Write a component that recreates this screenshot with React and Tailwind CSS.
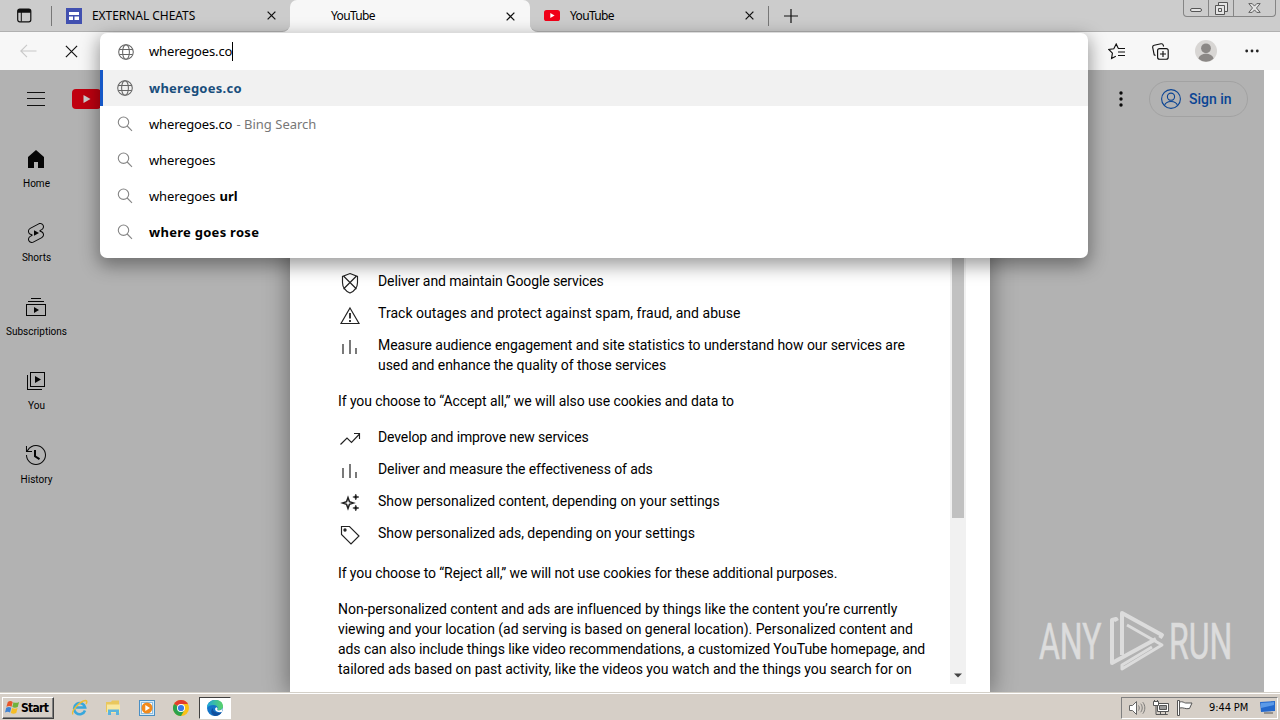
const YT = {
  home: 'M4 21V10.08l8-6.96 8 6.96V21h-6v-6h-4v6H4z',
  shorts:
    'M10 14.65v-5.3L15 12l-5 2.65zm7.77-4.33-1.2-.5L18 9.06c1.84-.96 2.53-3.23 1.56-5.06s-3.24-2.53-5.07-1.56L6 6.94c-1.29.68-2.07 2.04-2 3.49.07 1.42.93 2.67 2.22 3.25.03.01 1.2.5 1.2.5L6 14.93c-1.83.97-2.53 3.24-1.56 5.07.97 1.83 3.24 2.53 5.07 1.56l8.5-4.5c1.29-.68 2.06-2.04 1.99-3.49-.07-1.42-.94-2.68-2.23-3.25zm-.23 5.86-8.5 4.5c-1.34.71-3.01.2-3.72-1.14-.71-1.34-.2-3.01 1.14-3.72l2.04-1.08v-1.21l-.69-.28-1.11-.46c-.99-.41-1.65-1.35-1.7-2.41-.05-1.06.52-2.06 1.46-2.56l8.5-4.5c1.34-.71 3.01-.2 3.72 1.14.71 1.34.2 3.01-1.14 3.72L15.5 9.26v1.21l1.8.74c.99.41 1.65 1.35 1.7 2.41.05 1.06-.52 2.06-1.46 2.56z',
  subs: 'M10 18v-6l5 3-5 3zm7-15H7v1h10V3zm3 3H4v1h16V6zm2 3H2v12h20V9zM3 10h18v10H3V10z',
  you: 'm11 7 6 3.5-6 3.5V7zm7 13H4V6H3v15h15v-1zm3-2H6V3h15v15zM7 17h13V4H7v13z',
  history:
    'M14.97 16.95 10 13.87V7h2v5.76l4.03 2.49-1.06 1.7zM22 12c0 5.51-4.49 10-10 10S2 17.51 2 12h1c0 4.96 4.04 9 9 9s9-4.04 9-9-4.04-9-9-9C8.81 3 5.92 4.64 4.28 7.38c-.11.18-.22.37-.31.56L3.94 8H8v1H1.96V3h1v4.74c.04-.09.07-.17.11-.25.11-.22.23-.42.35-.63C5.22 3.86 8.51 2 12 2c5.51 0 10 4.49 10 10z',
};

function Cross({ className = 'size-[9px]', w = 1.4 }) {
  return (
    <svg className={className} viewBox="0 0 10 10" stroke="#111" strokeWidth={w} fill="none">
      <path d="M.7.7l8.6 8.6M9.3.7L.7 9.3" />
    </svg>
  );
}

function YtBadge({ className }) {
  return (
    <svg className={className} viewBox="0 0 16 11">
      <rect width="16" height="11" rx="2.6" fill="#f00018" />
      <path d="M6.3 3.1v4.8l4.3-2.4z" fill="#fff" />
    </svg>
  );
}

function TabStrip() {
  return (
    <div className="flex h-[32px] bg-linear-to-b from-[#cccccc] from-50% to-[#f7f7f7] to-50% text-[12px] text-black">
      <div className="flex w-[290px] shrink-0 items-center rounded-br-[8px] border-b border-[#b0b0b0] bg-[#cccccc]">
        <svg className="ml-[17px] size-[15px]" viewBox="0 0 15 15">
          <rect x=".7" y="1.2" width="13.1" height="12.6" rx="2" fill="none" stroke="#111" strokeWidth="1.2" />
          <path d="M.8 3a2 2 0 0 1 2-2h9a2 2 0 0 1 2 2v1.7H.8z" fill="#111" />
          <path d="M4.3 4v9.5" stroke="#111" />
        </svg>
        <div className="ml-[19px] h-[20px] w-px bg-[#777]" />
        <svg className="ml-[14px] size-[16px]" viewBox="0 0 16 16">
          <rect width="16" height="16" fill="#4150b0" />
          <path d="M3 4h10v3H3zM3 8.5h4V12H3zM8.5 8.5H13V12H8.5z" fill="#fff" />
        </svg>
        <span className="ml-[10px] w-[175px] text-[12px] tracking-[-0.05px]">EXTERNAL CHEATS</span>
        <Cross />
      </div>
      <div className="flex h-[32px] w-[240px] shrink-0 items-center rounded-t-[7px] bg-[#f7f7f7]">
        <span className="ml-[41px] w-[175px] tracking-[-0.65px]">YouTube</span>
        <Cross />
      </div>
      <div className="flex flex-1 items-center rounded-bl-[8px] border-b border-[#b0b0b0] bg-[#cccccc]">
        <YtBadge className="ml-[14px] h-[11px] w-[16px]" />
        <span className="ml-[10px] w-[175px] tracking-[-0.65px]">YouTube</span>
        <Cross />
        <div className="ml-[14px] h-[20px] w-px bg-[#777]" />
        <svg className="ml-[15px] size-[14px]" viewBox="0 0 14 14" stroke="#111" strokeWidth="1.2">
          <path d="M7 0v14M0 7h14" />
        </svg>
        <div className="mr-[4px] mb-auto ml-auto flex h-[17px] w-[93px] rounded-b-[4px] border border-t-0 border-[#858585]">
          <div className="flex w-[25px] items-center justify-center border-r border-[#858585]">
            <div className="mt-[4px] h-[4px] w-[12px] rounded-[2px] border border-[#555] bg-[#e4e4e4]" />
          </div>
          <div className="flex w-[25px] items-center justify-center border-r border-[#858585]">
            <svg className="size-[13px]" viewBox="0 0 13 13" fill="#e4e4e4" stroke="#555">
              <path d="M3.5.5h9v9h-9z" />
              <path d="M.5 3.500h9v9h-9z" />
              <path d="M3.500 6.500h3v3h-3z" />
            </svg>
          </div>
          <div className="flex flex-1 items-center justify-center">
            <svg className="h-[10px] w-[13px]" viewBox="0 0 13 10" fill="#e4e4e4" stroke="#555" strokeWidth=".9">
              <path d="M.8.6h3.400l2.300 2.500L8.800.6h3.400L8.500 5l3.700 4.400H8.800L6.500 6.900 4.200 9.400H.8L4.500 5z" />
            </svg>
          </div>
        </div>
      </div>
    </div>
  );
}

function Toolbar() {
  return (
    <div className="flex h-[38px] items-center bg-[#f7f7f7]">
      <svg className="ml-[20px] h-[14px] w-[17px]" viewBox="0 0 17 14" fill="none" stroke="#c8c8c8" strokeWidth="1.1">
        <path d="M16.500 7H1M7 .8L.8 7 7 13.200" />
      </svg>
      <Cross className="ml-[28px] size-[13px]" w={0.9} />
      <div className="mr-[21px] ml-auto flex items-center">
        <svg className="h-[17px] w-[18px]" viewBox="0 0 18 17" fill="none" stroke="#111" strokeWidth="1.150">
          <path d="M10.200 5.200L8.200 1 5.800 5.700.8 6.500l3.600 3.700-.8 5.200 4.200-2.200M10 5.500h7M10 9h7M10 12.500h7" />
        </svg>
        <svg className="ml-[26px] h-[17px] w-[17px]" viewBox="0 0 17 17" fill="none" stroke="#111" strokeWidth="1.150">
          <rect x="5.600" y="5.600" width="10.600" height="10.600" rx="2" />
          <path d="M11 8v6M8 11h6M3.500 12.500L2.200 11.800.7 4.500A2 2 0 0 1 2.200 2.200L9 .8a2 2 0 0 1 2.300 1.500l.3 1.200" />
        </svg>
        <svg className="ml-[26px] size-[22px]" viewBox="0 0 22 22">
          <circle cx="11" cy="11" r="11" fill="#d8d6d4" />
          <circle cx="11" cy="8.300" r="4.900" fill="#8b8886" />
          <path d="M3.500 18.700c1-6.500 14-6.500 15 0a11 11 0 0 1-15 0z" fill="#8b8886" />
        </svg>
        <svg className="ml-[28px] h-[4px] w-[14px]" viewBox="0 0 14 4" fill="#222">
          <circle cx="1.700" cy="2" r="1.400" />
          <circle cx="7" cy="2" r="1.400" />
          <circle cx="12.300" cy="2" r="1.400" />
        </svg>
      </div>
    </div>
  );
}

const guide = [
  ['Home', YT.home],
  ['Shorts', YT.shorts],
  ['Subscriptions', YT.subs],
  ['You', YT.you],
  ['History', YT.history],
];

function Page() {
  return (
    <div className="flex h-full w-[1264px] flex-col bg-[#b2b2b2] font-['Roboto',sans-serif]">
      <div className="flex h-[58px] shrink-0 items-center">
        <svg className="ml-[27px] h-[14px] w-[18px]" viewBox="0 0 18 14" stroke="#111">
          <path d="M0 .5h18M0 6.500h18M0 13.500h18" />
        </svg>
        <svg className="ml-[27px] h-[20px] w-[29px]" viewBox="0 0 29 20">
          <rect width="29" height="20" rx="4" fill="#c00010" />
          <path d="M11.500 6v8l7-4z" fill="#ccc" />
        </svg>
        <div className="mr-[16px] ml-auto flex items-center">
          <svg className="mr-[26px] h-[16px] w-[4px]" viewBox="0 0 4 16" fill="#0a0a0a">
            <circle cx="2" cy="2" r="1.700" />
            <circle cx="2" cy="8" r="1.700" />
            <circle cx="2" cy="14" r="1.700" />
          </svg>
          <div className="flex h-[36px] w-[99px] items-center rounded-full border border-[#a2a2a2] pl-[11px]">
            <svg className="size-[20px]" viewBox="0 0 20 20" fill="none" stroke="#0a4494" strokeWidth="1.100">
              <circle cx="10" cy="10" r="9.400" />
              <circle cx="10" cy="7.700" r="3.600" />
              <path d="M3.500 16.600c1.500-5.500 11.500-5.500 13 0" />
            </svg>
            <span className="ml-[8px] text-[14px] font-medium text-[#0a4494]">Sign in</span>
          </div>
        </div>
      </div>
      <div className="flex w-[72px] flex-col pt-[4px]">
        {guide.map(([label, d]) => (
          <div key={label} className="flex h-[74px] flex-col items-center pt-[15px]">
            <svg className="size-[24px]" viewBox="0 0 24 24" fill="#060606">
              <path d={d} />
            </svg>
            <span className="mt-[6px] pl-[1px] text-[10px] leading-[14px] whitespace-nowrap text-black">{label}</span>
          </div>
        ))}
      </div>
    </div>
  );
}

const bars = <path d="M5 9v10M12 5v14M18 13v6" strokeWidth="1.200" />;
const essential = [
  [
    <path d="M12 2.500l7.500 3v6c0 5-3 8.500-7.500 10.500-4.500-2-7.500-5.500-7.500-10.500v-6zM5.500 5l13 13M18.500 5l-13 13" />,
    [['Deliver and maintain Google services', 'tracking-[-0.11px]']],
  ],
  [
    <g>
      <path d="M12 5L21 20.500H3z" />
      <path d="M12 10v5.500M12 17v2" strokeWidth="1.800" />
    </g>,
    [['Track outages and protect against spam, fraud, and abuse', 'tracking-[0.04px]']],
  ],
  [
    bars,
    [
      ['Measure audience engagement and site statistics to understand how our services are', 'tracking-[-0.05px]'],
      ['used and enhance the quality of those services', 'tracking-[-0.07px]'],
    ],
  ],
];
const optional = [
  [<path d="M2.500 17.500l6.500-6.500 4.500 4.500 8-8.500M16 6.500h5.500v5.500" />, [['Develop and improve new services', 'tracking-[-0.12px]']]],
  [bars, [['Deliver and measure the effectiveness of ads', 'tracking-[-0.11px]']]],
  [
    <g transform="translate(0 -1)">
      <path d="M10 7.500l1.400 4.100L15.500 13l-4.100 1.400L10 18.500l-1.400-4.100L4.500 13l4.100-1.400z" strokeWidth="1.500" />
      <path d="M17.800 4l.8 2.200 2.400.8-2.400.8-.8 2.200-.8-2.200-2.200-.8 2.200-.8zM17.800 15l.8 2.200 2.400.8-2.400.8-.8 2.200-.8-2.200-2.200-.8 2.200-.8z" fill="#111" strokeWidth=".5" />
    </g>,
    [['Show personalized content, depending on your settings', 'tracking-[-0.025px]']],
  ],
  [
    <g>
      <path d="M3.500 3.500h8l9.500 9.500-8 8-9.500-9.500z" />
      <circle cx="7" cy="7" r="1.100" fill="#111" />
    </g>,
    [['Show personalized ads, depending on your settings', 'tracking-[-0.03px]']],
  ],
];

function Bullets({ items }) {
  return (
    <ul className="flex flex-col gap-[12px]">
      {items.map(([icon, lines]) => (
        <li key={lines[0][0]} className="flex last:min-h-[24px]">
          <svg className="mr-[16px] -mb-[4px] size-[24px] shrink-0" viewBox="0 0 24 24" fill="none" stroke="#222" strokeWidth="1.150">
            {icon}
          </svg>
          <div>
            {lines.map(([text, tracking]) => (
              <div key={text} className={tracking}>
                {text}
              </div>
            ))}
          </div>
        </li>
      ))}
    </ul>
  );
}

function ConsentDialog() {
  return (
    <div className="absolute top-0 left-[290px] flex h-[622px] w-[700px] bg-white shadow-[0_0_22px_2px_rgba(0,0,0,0.38)]">
      <div className="flex h-[612px] w-[660px] flex-col gap-[16px] overflow-hidden pt-[201px] pl-[48px] font-['Roboto',sans-serif] text-[14px] leading-[20px] whitespace-nowrap text-black">
        <Bullets items={essential} />
        <p className="tracking-[-0.09px]">If you choose to “Accept all,” we will also use cookies and data to</p>
        <Bullets items={optional} />
        <p className="tracking-[-0.095px]">If you choose to “Reject all,” we will not use cookies for these additional purposes.</p>
        <p>
          <span className="tracking-[-0.02px]">Non-personalized content and ads are influenced by things like the content you’re currently</span>
          <br />
          <span className="tracking-[-0.035px]">viewing and your location (ad serving is based on general location). Personalized content and</span>
          <br />
          <span className="tracking-[-0.08px]">ads can also include things like video recommendations, a customized YouTube homepage, and</span>
          <br />
          <span className="tracking-[-0.03px]">tailored ads based on past activity, like the videos you watch and the things you search for on</span>
          <br />
          <span className="tracking-[-0.05px]">YouTube. We also use cookies and data to tailor the experience to be age-appropriate, if relevant.</span>
        </p>
      </div>
      <div className="flex h-[614px] w-[16px] flex-col items-center bg-[#f1f1f1]">
        <div className="h-[448px] w-[12px] bg-[#c1c1c1]" />
        <svg className="mt-auto mb-[6px] h-[5px] w-[8px]" viewBox="0 0 8 5">
          <path d="M0 .5h8L4 4.500z" fill="#444" />
        </svg>
      </div>
    </div>
  );
}

function Watermark() {
  return (
    <svg className="absolute top-[534px] left-[1034px] h-[76px] w-[204px]" viewBox="1034 604 204 76">
      <g fill="#dcdcdc" stroke="#dcdcdc" strokeWidth=".6" className="font-['Roboto',sans-serif] text-[50px]">
        <text transform="translate(1039 659) scale(.64 1)">ANY</text>
        <text transform="translate(1169 659) scale(.64 1)">RUN</text>
      </g>
      <g fill="none" stroke="#dcdcdc" strokeWidth="4" strokeLinejoin="round">
        <path d="M1117 621l-1-2-4 1v43l44-24" />
        <path d="M1122 655v-42l40 22-2 3" />
        <path d="M1127 625l35 20-40 24v-4l30-18" strokeWidth="3" />
      </g>
    </svg>
  );
}

function Globe() {
  return (
    <svg className="size-[16px]" viewBox="0 0 16 16" fill="none" stroke="#666" strokeWidth="1.050">
      <circle cx="8" cy="8" r="7.300" />
      <ellipse cx="8" cy="8" rx="3.400" ry="7.300" />
      <path d="M1.300 5.500h13.400M1.300 10.500h13.400" />
    </svg>
  );
}

function Lens() {
  return (
    <svg className="size-[16px]" viewBox="0 0 16 16" fill="none" stroke="#858585" strokeWidth="1.100">
      <circle cx="6.500" cy="6.200" r="5.200" />
      <path d="M10.200 10l4.800 4.800" />
    </svg>
  );
}

function Omnibox() {
  const row = 'flex h-[36px] items-center gap-[16px] pl-[17px]';
  return (
    <div className="absolute top-[33px] left-[100px] h-[225px] w-[988px] rounded-[7px] bg-white text-[13px] whitespace-nowrap text-black shadow-[0_6px_18px_2px_rgba(0,0,0,0.38)]">
      <div className="flex h-[37px] items-center pl-[18px]">
        <Globe />
        <span className="ml-[15px] tracking-[-0.15px]">wheregoes.co</span>
        <span className="h-[19px] w-px bg-black" />
      </div>
      <div className="flex h-[36px] items-center gap-[16px] border-l-[3px] border-[#1558c7] bg-[#f1f1f1] pl-[14px]">
        <Globe />
        <b className="pt-[2px] tracking-[0.25px] text-[#194e7c]">wheregoes.co</b>
      </div>
      <div className={row}>
        <Lens />
        <span className="pt-[2px]">
          <span className="tracking-[-0.15px]">wheregoes.co </span>
          <span className="ml-[1px] text-[#777]">- Bing Search</span>
        </span>
      </div>
      <div className={row}>
        <Lens />
        <span className="pt-[2px] tracking-[-0.13px]">wheregoes</span>
      </div>
      <div className={row}>
        <Lens />
        <span className="pt-[2px]">
          <span className="tracking-[-0.13px]">wheregoes </span>
          <b className="ml-[1px]">url</b>
        </span>
      </div>
      <div className={row}>
        <Lens />
        <b className="pt-[2px] tracking-[0.28px]">where goes rose</b>
      </div>
    </div>
  );
}

function Taskbar() {
  return (
    <div className="flex h-[28px] items-center border-t border-[#d4d0c8] bg-[#d6cfc7] shadow-[inset_0_1px_0_#fff]">
      <div className="mt-[2px] ml-[2px] flex h-[22px] w-[52px] items-center border border-t-white border-r-[#404040] border-b-[#404040] border-l-white pl-[2px] shadow-[inset_-1px_-1px_0_#808080]">
        <svg className="size-[15px] shrink-0" viewBox="0 0 16 16">
          <path d="M3 2c2-1.300 3.800-1 5.200 0L7 7.200C5.500 6.200 3.500 6.200 1.500 7.300z" fill="#e8562a" />
          <path d="M9 2.400c2 1 4 .8 6-.3L13.600 7.500c-2 1-4 1-5.800 0z" fill="#70b23c" />
          <path d="M1.300 8.200c2-1 3.800-1 5.400 0L5.400 13.300C3.800 12.300 2 12.300 0 13.300z" fill="#3f83d4" />
          <path d="M7.500 8.500c2 1 3.900 1 5.900 0L12 13.900c-2 1-4 1-5.800 0z" fill="#f6bd25" />
        </svg>
        <span className="ml-[1px] font-['DejaVu_Sans_Condensed','DejaVu_Sans',sans-serif] text-[12px] font-bold tracking-[-0.7px] text-black">Start</span>
      </div>
      <svg className="mt-[2px] ml-[17px] size-[17px]" viewBox="0 0 17 17" fill="none">
        <path d="M14 11.500A5.600 5.600 0 1 1 14.200 8.500H5" stroke="#38a7dc" strokeWidth="2.500" />
        <path d="M2 15.500C-1 13 9 2 14.500 1.500c2 0 1.500 2 .5 3.500" stroke="#edbd33" strokeWidth="1.400" />
      </svg>
      <svg className="mt-[2px] ml-[17px] size-[17px]" viewBox="0 0 17 17">
        <path d="M1 3h5l1-1.500h7V13H1z" fill="#e9c75d" />
        <path d="M2 5.500h13V14H2z" fill="#f8e7a0" />
        <path d="M3 16v-5.500h11V16h-3v-3H6v3z" fill="#5bb4dd" />
      </svg>
      <svg className="mt-[2px] ml-[17px] size-[16px]" viewBox="0 0 16 16">
        <rect x=".5" y=".5" width="15" height="15" fill="#d6ebf8" stroke="#4a8fc4" />
        <rect x="2.500" y="2.500" width="11" height="11" fill="#fff" stroke="#8dbde0" />
        <circle cx="8" cy="8" r="5.500" fill="#f28a1c" />
        <path d="M6.300 5v6l4.700-3z" fill="#fff" />
      </svg>
      <svg className="mt-[2px] ml-[18px] size-[16px]" viewBox="0 0 16 16">
        <circle cx="8" cy="8" r="8" fill="#fbc116" />
        <path d="M8 8L1.070 4A8 8 0 0 1 14.930 4z" fill="#e33b2e" />
        <path d="M1.070 4A8 8 0 0 0 8 16L11.460 10 8 8z" fill="#2ba24c" />
        <path d="M8 4h6.930L11.460 10z" fill="#fbc116" />
        <circle cx="8" cy="8" r="4" fill="#fff" />
        <circle cx="8" cy="8" r="3.100" fill="#3b79e6" />
      </svg>
      <div className="mt-[2px] ml-[10px] flex h-[22px] w-[32px] items-center justify-center border border-t-[#404040] border-r-white border-b-white border-l-[#404040] bg-white">
        <svg className="size-[16px]" viewBox="0 0 16 16">
          <defs>
            <linearGradient id="edgeTop" x1="0" x2="1">
              <stop offset="0" stopColor="#1ea7dc" />
              <stop offset="1" stopColor="#5bd467" />
            </linearGradient>
          </defs>
          <circle cx="8" cy="8" r="8" fill="#1474c8" />
          <path d="M0 8C0-2 16-3 16 6.500c0 3-3.500 4.500-6 3.500 2-2 0-5-3.500-5C3.500 5 1 6 0 8z" fill="url(#edgeTop)" />
          <path d="M6 8c-1 3 3 6 8.700 4.200A8 8 0 0 1 8 16c-4-1-5-6-2-8z" fill="#114f9d" />
          <path d="M16 7.500c-1 3-4.500 3.300-6 2.500 1-1 .5-2-.5-2.700C7 8 7.500 13 14.800 12.100z" fill="#fff" />
        </svg>
      </div>
      <div className="mt-[2px] mr-[2px] ml-auto flex h-[22px] w-[157px] items-center border border-t-[#808080] border-r-white border-b-white border-l-[#808080]">
        <svg className="ml-[7px] h-[16px] w-[17px]" viewBox="0 0 17 16" fill="#fff" stroke="#666">
          <path d="M.5 5.500h3l4-4v13l-4-4h-3z" />
          <path d="M9.500 5.500c1 1.500 1 3.500 0 5M11.700 3.700c2 2.500 2 6 0 8.500M13.800 2.200c2.700 3.500 2.700 8 0 11.500" fill="none" strokeWidth=".8" />
        </svg>
        <svg className="ml-[7px] size-[16px]" viewBox="0 0 16 16" fill="#fff" stroke="#555">
          <path d="M4.500 3.500h11v8h-11z" />
          <path d="M6.500 5.500h7v4h-7z" fill="#999" />
          <path d="M7.500 12v2.500h-2h9h-2V12M3 6v8.500h3" fill="none" />
          <path d="M.5 1.500h5v4h-5zM1.500 0v2M4.500 0v2" />
        </svg>
        <svg className="ml-[8px] size-[16px]" viewBox="0 0 16 16" fill="#fff" stroke="#555">
          <path d="M2.500 2c3-1 5 1 6 1h6.500l-2.500 5.500c-4 1-6-1.500-10-.5z" />
          <path d="M.5.5h2v15h-2z" />
        </svg>
        <span className="ml-[16px] w-[51px] pt-[1px] font-['DejaVu_Sans_Condensed','DejaVu_Sans',sans-serif] text-[11px] tracking-[-0.1px] whitespace-nowrap text-black">9:44 PM</span>
        <svg className="h-[13px] w-[16px] shrink-0" viewBox="0 0 16 13">
          <path d="M0 1l15-1v10l-14 1z" fill="#2368cc" />
          <path d="M1 2l13-.9v3L1 7z" fill="#5b9ae8" />
          <path d="M4 12h9" stroke="#555" />
        </svg>
      </div>
    </div>
  );
}

export default function App() {
  return (
    <div className="relative flex h-[720px] w-[1280px] flex-col overflow-hidden bg-white font-['Noto_Sans','Open_Sans',sans-serif]">
      <TabStrip />
      <Toolbar />
      <div className="relative h-[622px] overflow-hidden">
        <Page />
        <ConsentDialog />
        <Watermark />
      </div>
      <Taskbar />
      <Omnibox />
    </div>
  );
}
